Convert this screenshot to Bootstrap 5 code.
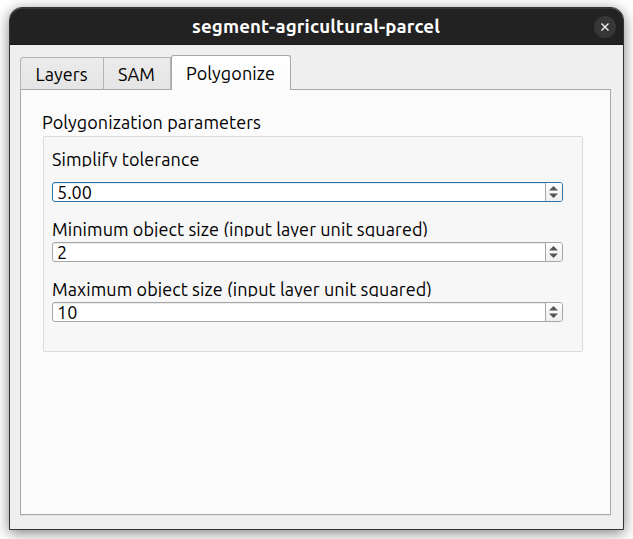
<!DOCTYPE html>
<html lang="en">
<head>
<meta charset="utf-8">
<meta name="viewport" content="width=device-width, initial-scale=1">
<title>segment-agricultural-parcel</title>
<link href="https://cdn.jsdelivr.net/npm/bootstrap@5.3.0/dist/css/bootstrap.min.css" rel="stylesheet">
<style>
  body { width: 633px; height: 539px; padding: 7px 9px 9px; font-family: Ubuntu, "Noto Sans", sans-serif; font-size: 18px; line-height: 24px; letter-spacing: .09px; color: #000; background: #fff; }
  .window { height: 523px; border: 1px solid #333; border-radius: 13px 13px 0 0; background: #efefef; box-shadow: 0 3px 14px rgba(0,0,0,.5); }
  .titlebar { height: 37px; background: #222; border-top: 1px solid #363636; border-bottom: 1px solid #181818; border-radius: 12px 12px 0 0; color: #fff; padding: 0 7px 0 29px; }
  .titlebar h1 { font-size: 18.67px; line-height: 24px; letter-spacing: .13px; padding-right: 1px; }
  .close-btn { width: 22px; height: 22px; background: #373737; border: 0; }
  .content { padding: 10px 12px 14px 10px; }
  .dialog-tabs { height: 35px; border: 0; position: relative; z-index: 1; }
  .dialog-tabs .nav-link { margin: 0; padding: 4px 1px 0 0; height: 33px; border: 1px solid #b4b4b4; border-bottom-color: #a8a8a8; border-left-width: 0; border-radius: 0; color: #000; background: linear-gradient(#ebebeb, #e5e5e5); text-align: center; }
  .dialog-tabs .tab-layers { width: 84px; border-left-width: 1px; border-radius: 3px 0 0 0; }
  .dialog-tabs .tab-sam { width: 67px; }
  .dialog-tabs .nav-link.active { width: 120px; height: 35px; padding-top: 5px; border: 1px solid #a8a8a8; border-bottom: 0; border-radius: 3px 3px 0 0; background: linear-gradient(#fff, #fbfbfb); color: #000; }
  .panel { height: 426px; margin-top: -1px; border: 1px solid #a8a8a8; background: #fbfbfb; box-shadow: 0 1px #e2e2e2; padding: 20px 27px 0 22px; }
  .group-title { height: 26px; font-size: 18px; line-height: 24px; margin: 0 0 0 -1px; }
  .group { height: 216px; border: 1px solid #dcdcdc; border-radius: 2px; background: #f7f7f7; padding: 10px 19px 0 8px; }
  .field-label { height: 20px; overflow: hidden; white-space: nowrap; }
  .spin { height: 20px; margin: 5px 0 15px; border: 1px solid #a6a6a6; border-radius: 3px; background: #fff; box-shadow: inset 0 1px #ebebeb; overflow: hidden; }
  .spin.focused { margin-top: 15px; border-color: #2b74a8; box-shadow: inset 0 1px #e3edf5; }
  .spin input { border: 0; outline: 0; background: none; padding: 0 0 0 4px; height: 18px; line-height: 18px; color: #000; }
  .steps { width: 17px; padding-right: 1px; border-left: 1px solid #a6a6a6; background: linear-gradient(#fdfdfd, #efefef); }
</style>
</head>
<body class="overflow-hidden">
<main class="window">
  <header class="titlebar d-flex align-items-center">
    <h1 class="flex-grow-1 text-center fw-bold m-0">segment-agricultural-parcel</h1>
    <button class="close-btn rounded-circle p-0 d-flex align-items-center justify-content-center" aria-label="Close">
      <svg width="8" height="8" viewBox="0 0 8 8" stroke="#f4f4f4" stroke-width="1.4"><path d="M.5.5l7 7M7.5.5l-7 7"/></svg>
    </button>
  </header>
  <div class="content">
    <nav class="nav nav-tabs dialog-tabs align-items-end flex-nowrap">
      <a class="nav-link tab-layers">Layers</a>
      <a class="nav-link tab-sam">SAM</a>
      <a class="nav-link active">Polygonize</a>
    </nav>
    <section class="panel">
      <h2 class="group-title fw-normal">Polygonization parameters</h2>
      <div class="group">
        <div class="field-label">Simplify tolerance</div>
        <div class="spin focused d-flex"><input class="flex-grow-1" value="5.00" aria-label="Simplify tolerance"><div class="steps d-flex align-items-center justify-content-center"><svg width="9" height="12" fill="#555"><path d="M4.5 0L9 4.5H0zM4.5 12L9 7.5H0z"/></svg></div></div>
        <div class="field-label">Minimum object size (input layer unit squared)</div>
        <div class="spin d-flex"><input class="flex-grow-1" value="2" aria-label="Minimum object size"><div class="steps d-flex align-items-center justify-content-center"><svg width="9" height="12" fill="#555"><path d="M4.5 0L9 4.5H0zM4.5 12L9 7.5H0z"/></svg></div></div>
        <div class="field-label">Maximum object size (input layer unit squared)</div>
        <div class="spin d-flex"><input class="flex-grow-1" value="10" aria-label="Maximum object size"><div class="steps d-flex align-items-center justify-content-center"><svg width="9" height="12" fill="#555"><path d="M4.5 0L9 4.5H0zM4.5 12L9 7.5H0z"/></svg></div></div>
      </div>
    </section>
  </div>
</main>
<script src="https://cdn.jsdelivr.net/npm/bootstrap@5.3.0/dist/js/bootstrap.bundle.min.js"></script>
</body>
</html>
